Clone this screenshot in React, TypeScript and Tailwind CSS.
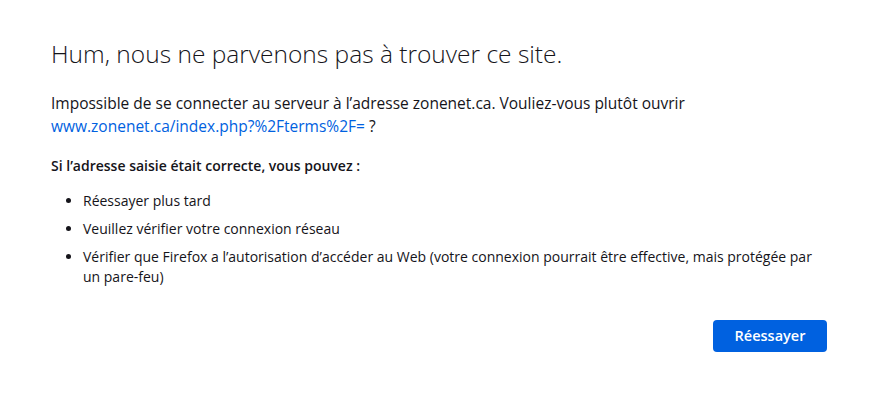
export default function App() {
  return (
    <div
      className="min-h-[407px] w-full bg-white text-[#15141a]"
      style={{ fontFamily: "'Open Sans', 'Noto Sans', sans-serif" }}
    >
      <div className="w-[776px] pl-[51px] pt-[38px] box-content">
        <h1 className="text-[24.5px] leading-[32px] font-light">
          Hum, nous ne parvenons pas à trouver ce site.
        </h1>
        <p className="mt-[22px] text-[15.5px] leading-[23px]">
          Impossible de se connecter au serveur à l’adresse zonenet.ca. Vouliez-vous plutôt ouvrir{" "}
          <a className="text-[#0061e0]" href="#">
            www.zonenet.ca/index.php?%2Fterms%2F=
          </a>{" "}
          ?
        </p>
        <p className="mt-[18px] text-[14px] leading-[20px] font-semibold">
          Si l’adresse saisie était correcte, vous pouvez :
        </p>
        <ul className="mt-[15px] list-disc pl-[32px] text-[14px] leading-[20px] flex flex-col gap-[8px]">
          <li>Réessayer plus tard</li>
          <li>Veuillez vérifier votre connexion réseau</li>
          <li>
            Vérifier que Firefox a l’autorisation d’accéder au Web (votre connexion pourrait être
            effective, mais protégée par un pare-feu)
          </li>
        </ul>
        <div className="mt-[33px] flex justify-end">
          <button className="h-[32px] w-[114px] rounded-[4px] bg-[#0061e0] text-[14.5px] font-semibold text-white">
            Réessayer
          </button>
        </div>
      </div>
    </div>
  );
}
